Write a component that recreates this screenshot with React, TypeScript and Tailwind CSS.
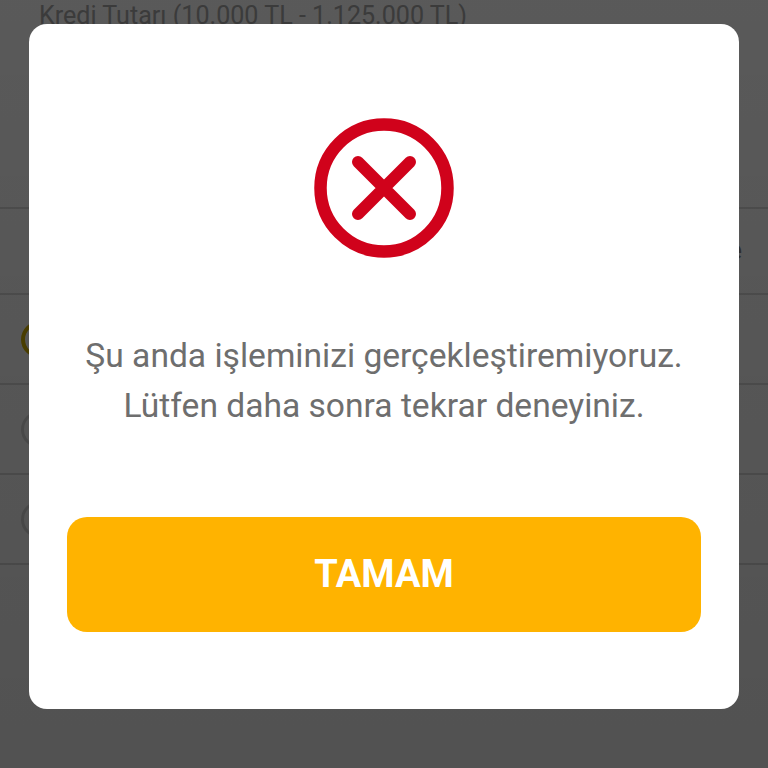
const rows = [
  { height: "h-[86px]", ring: "border-[#d9b400] border-[4px] invisible", label: "e" },
  { height: "h-[90px]", ring: "border-[#d9b400] border-[4px]", label: "" },
  { height: "h-[90px]", ring: "border-[#d8d8d8] border-[3px]", label: "" },
  { height: "h-[90px]", ring: "border-[#d8d8d8] border-[3px]", label: "" },
];

function ErrorIcon() {
  return (
    <svg width="140" height="140" viewBox="0 0 140 140" fill="none">
      <circle cx="70" cy="70" r="63.5" stroke="#d0021b" strokeWidth="12.5" />
      <path
        d="M44 44L96 96M96 44L44 96"
        stroke="#d0021b"
        strokeWidth="12"
        strokeLinecap="round"
      />
    </svg>
  );
}

export default function App() {
  return (
    <div className="relative h-[768px] w-[768px] overflow-hidden bg-white font-['Roboto',sans-serif]">
      {/* page behind the dialog */}
      <div className="pl-[39px] text-[25.1px] leading-[32px] text-[#a8a8a8]">
        Kredi Tutarı (10.000 TL - 1.125.000 TL)
      </div>
      <div className="mt-[175px] border-t-2 border-[#dcdcdc]">
        {rows.map((row, i) => (
          <div
            key={i}
            className={`flex items-center justify-between border-b-2 border-[#dcdcdc] pl-[21px] pr-[26px] ${row.height}`}
          >
            <div className={`h-[37px] w-[37px] rounded-full ${row.ring}`} />
            {row.label && (
              <span className="ml-auto text-[25px] text-[#888888]">{row.label}</span>
            )}
          </div>
        ))}
      </div>

      <div className="absolute inset-0 bg-gradient-to-b from-black/65 to-black/[0.68] pl-[29px] pt-[24px]">
        <div className="flex h-[685px] w-[710px] flex-col items-center rounded-[18px] bg-white px-[38px] pt-[94px]">
          <ErrorIcon />
          <p className="mt-[73px] whitespace-nowrap text-center text-[33.6px] leading-[50px] text-[#6e6e6e]">
            Şu anda işleminizi gerçekleştiremiyoruz.
            <br />
            Lütfen daha sonra tekrar deneyiniz.
          </p>
          <button
            type="button"
            className="mt-[86px] h-[115px] w-[634px] rounded-[20px] bg-[#ffb300] text-[38px] font-bold text-white"
          >
            TAMAM
          </button>
        </div>
      </div>
    </div>
  );
}
